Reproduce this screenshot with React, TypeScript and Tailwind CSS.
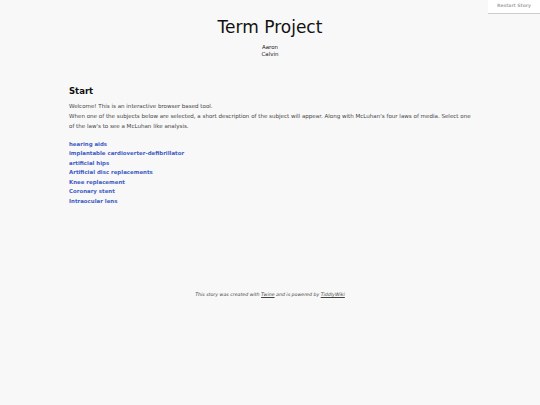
import React from "react";

const subjects = [
  "hearing aids",
  "implantable cardioverter-defibrillator",
  "artificial hips",
  "Artificial disc replacements",
  "Knee replacement",
  "Coronary stent",
  "Intraocular lens",
];

export default function App() {
  return (
    <div
      className="relative min-h-[405px] w-full bg-[#f8f8f8] text-[#333]"
      style={{ fontFamily: '"DejaVu Sans", Verdana, sans-serif' }}
    >
      <button className="absolute right-0 top-0 h-[14px] w-[52px] border-b border-[#ccc] bg-white text-[4.5px] font-bold text-[#aaa]">
        Restart Story
      </button>

      <header className="flex flex-col items-center pt-[17px]">
        <h1 className="text-[17px] leading-[20px] text-[#111]">Term Project</h1>
        <div className="mt-[7px] flex flex-col items-center text-[5.5px] leading-[7px] text-[#222]">
          <span>Aaron</span>
          <span>Calvin</span>
        </div>
      </header>

      <main className="ml-[69px] mt-[28px] w-[404px]">
        <h2 className="text-[8.5px] font-bold leading-[10px] text-[#111]">Start</h2>
        <div className="mt-[5px] text-[5.55px] leading-[10px] text-[#444]">
          <p>Welcome! This is an interactive browser based tool.</p>
          <p>
            When one of the subjects below are selected, a short description of the subject will
            appear. Along with McLuhan's four laws of media. Select one of the law's to see a
            McLuhan like analysis.
          </p>
        </div>
        <ul className="mt-[8.5px] flex flex-col text-[5.45px] font-bold leading-[9.5px] text-[#435dc4]">
          {subjects.map((s) => (
            <li key={s}>
              <a href="#">{s}</a>
            </li>
          ))}
        </ul>
      </main>

      <footer className="mt-[85px] text-center text-[4.7px] italic text-[#444]">
        This story was created with <span className="underline">Twine</span> and is powered by{" "}
        <span className="underline">TiddlyWiki</span>
      </footer>
    </div>
  );
}
